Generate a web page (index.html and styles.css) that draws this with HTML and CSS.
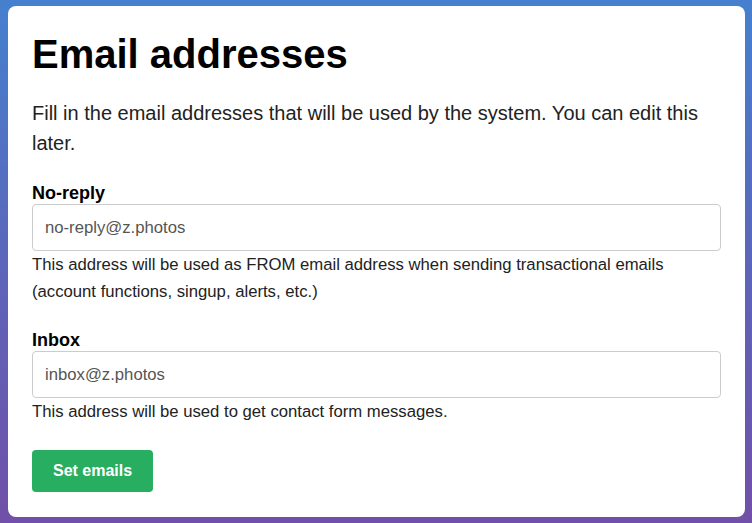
FILE: index.html
```html
<!DOCTYPE html>
<html lang="en">
<head>
<meta charset="utf-8">
<title>Email addresses</title>
<link rel="stylesheet" href="styles.css">
</head>
<body>
<main class="card">
  <h1 class="title">Email addresses</h1>
  <p class="intro">Fill in the email addresses that will be used by the system. You can edit this later.</p>
  <form class="form">
    <div class="field">
      <label class="label" for="noreply">No-reply</label>
      <input class="input" id="noreply" type="text" value="no-reply@z.photos">
      <p class="help">This address will be used as FROM email address when sending transactional emails (account functions, singup, alerts, etc.)</p>
    </div>
    <div class="field">
      <label class="label" for="inbox">Inbox</label>
      <input class="input" id="inbox" type="text" value="inbox@z.photos">
      <p class="help">This address will be used to get contact form messages.</p>
    </div>
    <div class="actions">
      <button class="button" type="button">Set emails</button>
    </div>
  </form>
</main>
</body>
</html>
```

FILE: styles.css
```css
* { box-sizing: border-box; }
html, body { margin: 0; height: 100%; }
body {
  background: linear-gradient(to bottom, #4580cf 0%, #5c66ba 50%, #7150a9 100%);
  font-family: "Liberation Sans", Arial, sans-serif;
  color: #111;
  padding: 6px 7px 6px 8px;
  overflow: hidden;
}
.card {
  background: #fff;
  border-radius: 8px;
  height: 511px;
  padding: 25px 24px 24px 24px;
}
.title {
  margin: 0;
  font-size: 40px;
  line-height: 46px;
  font-weight: bold;
  color: #000;
}
.intro {
  margin: 21px 0 0 0;
  font-size: 20px;
  line-height: 30px;
  color: #222;
}
.form { margin: 0; }
.field { margin-top: 25px; }
.label {
  display: block;
  font-size: 18px;
  line-height: 21px;
  font-weight: bold;
  color: #000;
}
.input {
  display: block;
  width: 100%;
  height: 47px;
  margin: 0;
  padding: 0 12px;
  border: 1px solid #ccc;
  border-radius: 4px;
  font-family: "Liberation Sans", Arial, sans-serif;
  font-size: 16.7px;
  color: #555;
  background: #fff;
}
.help {
  margin: 0;
  font-size: 16.7px;
  line-height: 27px;
  color: #222;
}
.actions { margin-top: 25px; }
.button {
  height: 42px;
  padding: 0 21px;
  border: 0;
  border-radius: 4px;
  background: #27ae60;
  color: #fff;
  font-family: "Liberation Sans", Arial, sans-serif;
  font-size: 16px;
  font-weight: bold;
}
```
